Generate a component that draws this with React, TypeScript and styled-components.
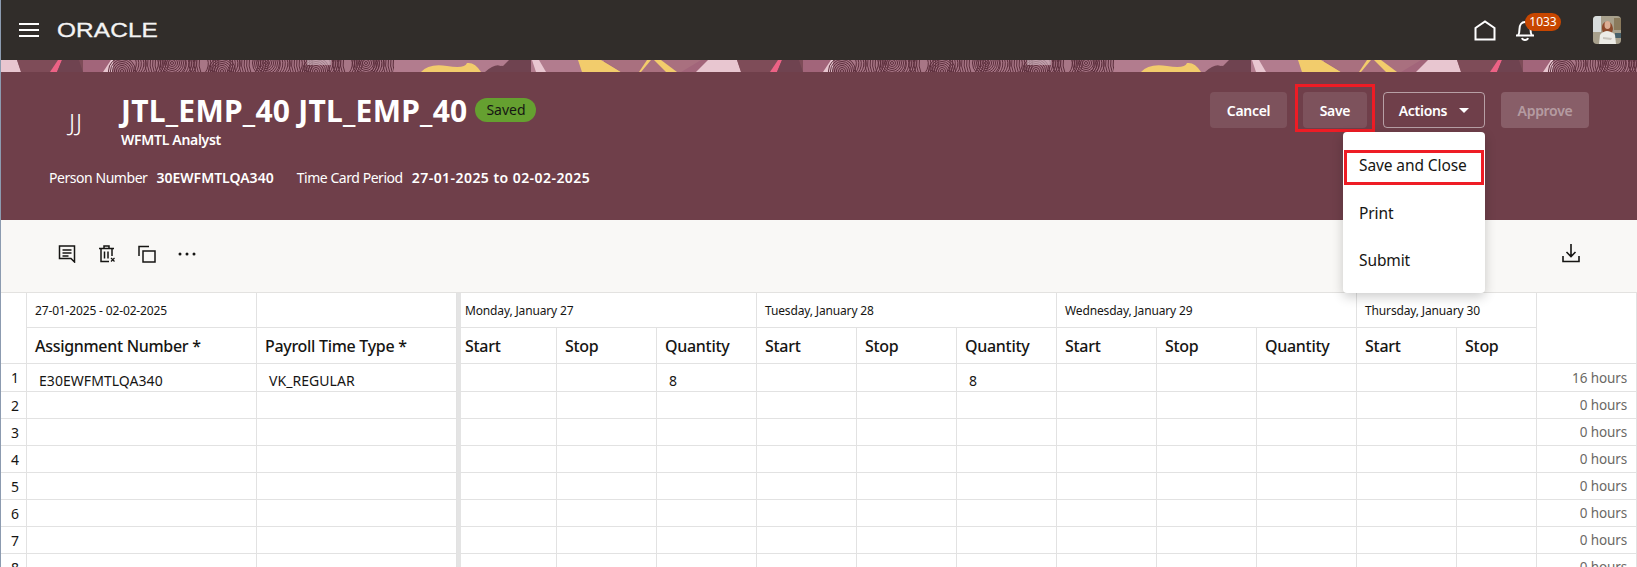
import React from "react";
import styled, { createGlobalStyle } from "styled-components";

const FONT = `"Noto Sans", "Open Sans", Arial, sans-serif`;

const GlobalStyle = createGlobalStyle`
  html, body {
    margin: 0;
    padding: 0;
    height: 567px;
    overflow: hidden;
    background: #fff;
    font-family: ${FONT};
  }
  * { box-sizing: border-box; }
`;

const Page = styled.div`
  width: 1637px;
  height: 567px;
  overflow: hidden;
  border-left: 1px solid #8c9bb0;
  display: flex;
  flex-direction: column;
  color: #161513;
`;

/* top nav */
const NavBar = styled.header`
  height: 60px;
  flex: none;
  background: #312d2a;
  display: flex;
  align-items: center;
  padding: 0 16px 0 18px;
`;
const Menu = styled.button`
  width: 20px;
  height: 14px;
  padding: 0;
  border: 0;
  background: none;
  display: flex;
  flex-direction: column;
  justify-content: space-between;
  margin-top: -1px;
  span { display: block; height: 2px; background: #fff; }
`;
const Logo = styled.div`
  margin-left: 18px;
  width: 100px;
  color: #f4f4f4;
  font-family: "Liberation Sans", Arial, sans-serif;
  font-size: 19.5px;
  line-height: 20px;
  letter-spacing: 0.1px;
  white-space: nowrap;
  transform: scaleX(1.25);
  transform-origin: left center;
  -webkit-text-stroke: 0.3px #f4f4f4;
`;
const NavRight = styled.div`
  margin-left: auto;
  display: flex;
  align-items: center;
`;
const NavIcon = styled.div`
  position: relative;
  display: flex;
  margin-right: ${(p: { $gap: number }) => p.$gap}px;
`;
const Badge = styled.span`
  position: absolute;
  left: 10px;
  top: -7px;
  width: 36px;
  height: 18px;
  border-radius: 9px;
  background: #c74600;
  color: #fff;
  font-size: 12px;
  line-height: 18px;
  text-align: center;
`;
const Avatar = styled.div`
  width: 28px;
  height: 28px;
  border-radius: 4px;
  overflow: hidden;
  display: flex;
`;

/* decorative strip */
const Strip = styled.div`
  height: 12px;
  flex: none;
  display: flex;
  background: #a2657a;
`;

/* banner */
const Banner = styled.section`
  height: 148px;
  flex: none;
  background: #6f3f4a;
  color: #fff;
  padding: 20px 48px 0 48px;
  display: flex;
  justify-content: space-between;
  align-items: flex-start;
`;
const Person = styled.div`
  display: flex;
  flex-direction: column;
`;
const PersonTop = styled.div`
  display: flex;
  align-items: flex-start;
`;
const Initials = styled.div`
  width: 72px;
  padding: 15px 0 0 20px;
  font-size: 24px;
  font-weight: 300;
  line-height: 30px;
  letter-spacing: 1px;
`;
const NameRow = styled.div`
  display: flex;
  align-items: center;
  gap: 8px;
`;
const Name = styled.h1`
  margin: 0;
  padding-top: 2px;
  font-size: 30px;
  line-height: 34px;
  font-weight: 700;
  letter-spacing: 0.25px;
  white-space: nowrap;
`;
const Status = styled.span`
  width: 61px;
  height: 24px;
  border-radius: 12px;
  background: #65a030;
  color: #161513;
  font-size: 14px;
  line-height: 23px;
  text-align: center;
`;
const Role = styled.div`
  font-size: 14px;
  font-weight: 600;
  line-height: 20px;
  letter-spacing: -0.3px;
  margin-top: 2px;
`;
const Facts = styled.div`
  display: flex;
  margin-top: 18px;
  font-size: 14px;
  line-height: 20px;
  white-space: nowrap;
`;
const FactLabel = styled.span`
  margin-right: 9px;
  letter-spacing: -0.45px;
`;
const FactValue = styled.span<{ $track?: number }>`
  font-weight: 600;
  margin-right: 23px;
  letter-spacing: ${(p) => p.$track ?? 0}px;
`;
const Actions = styled.div`
  display: flex;
  gap: 16px;
`;
const Button = styled.button<{ $w: number; $kind?: "outline" | "disabled" }>`
  position: relative;
  width: ${(p) => p.$w}px;
  height: 36px;
  margin: 0;
  padding: 0;
  border-radius: 4px;
  font-family: ${FONT};
  font-size: 14px;
  font-weight: 600;
  letter-spacing: -0.3px;
  color: ${(p) => (p.$kind === "disabled" ? "rgba(255,255,255,0.4)" : "#fff")};
  border: ${(p) => (p.$kind === "outline" ? "1px solid rgba(255,255,255,0.5)" : "0")};
  background: ${(p) =>
    p.$kind === "outline" ? "transparent" : p.$kind === "disabled" ? "#885e68" : "#7d525c"};
  display: flex;
  align-items: center;
  justify-content: center;
  gap: 12px;
`;
const Highlight = styled.span`
  position: absolute;
  left: -8px;
  right: -8px;
  top: -8px;
  bottom: -4px;
  border: 3px solid #ee1c25;
`;
const Caret = styled.i`
  width: 0;
  height: 0;
  border-left: 5px solid transparent;
  border-right: 5px solid transparent;
  border-top: 5px solid #fff;
`;
const ActionsMenu = styled.div`
  position: absolute;
  top: 39px;
  right: -1px;
  width: 142px;
  height: 161px;
  padding: 10px 0;
  background: #fff;
  border-radius: 4px;
  box-shadow: 0 4px 12px rgba(0, 0, 0, 0.2);
  z-index: 5;
`;
const MenuItem = styled.div`
  position: relative;
  height: 47.5px;
  line-height: 47px;
  padding-left: 16px;
  color: #161513;
  font-size: 15.5px;
  font-weight: 400;
  letter-spacing: -0.1px;
  text-align: left;
`;
const ItemHighlight = styled.span`
  position: absolute;
  left: 1px;
  right: 1px;
  top: 8px;
  bottom: 5px;
  border: 3px solid #ee1c25;
`;

/* toolbar */
const Toolbar = styled.div`
  height: 73px;
  flex: none;
  background: #f9f8f6;
  border-bottom: 1px solid #e3e2e0;
  display: flex;
  align-items: flex-start;
  justify-content: space-between;
  padding: 24px 57px 0 57px;
`;
const ToolGroup = styled.div<{ $drop?: number }>`
  display: flex;
  gap: 22px;
  margin-top: ${(p) => p.$drop ?? 0}px;
  svg { display: block; }
`;

/* grid */
const Sheet = styled.table`
  table-layout: fixed;
  width: 1636px;
  border-collapse: separate;
  border-spacing: 0;
  font-size: 13px;
`;
const Cell = styled.td<{ $split?: boolean }>`
  height: 27px;
  padding: 0 0 0 ${(p) => (p.$split ? 4 : 8)}px;
  border-right: 1px solid #e2e2e2;
  border-bottom: 1px solid #e2e2e2;
  border-left: ${(p) => (p.$split ? "4px solid #e4e4e4" : "0")};
  overflow: hidden;
  white-space: nowrap;
`;
const DateCell = styled(Cell).attrs({ as: "th" })`
  height: 35px;
  font-size: 12px;
  font-weight: 400;
  text-align: left;
  letter-spacing: -0.15px;
`;
const HeadCell = styled(Cell).attrs({ as: "th" })`
  height: 36px;
  font-size: 16px;
  font-weight: 500;
  text-align: left;
  letter-spacing: -0.3px;
`;
const BlankHead = styled(Cell).attrs({ as: "th" })`
  height: 71px;
`;
const RowNo = styled(Cell)`
  font-size: 14px;
  padding-left: 10px;
`;
const Value = styled.span`
  display: block;
  padding: 7px 0 0 4px;
  line-height: 20px;
  font-size: 14px;
  letter-spacing: 0.05px;
`;
const Total = styled(Cell)`
  text-align: right;
  padding: 0 9px 0 0;
  font-size: 13.5px;
  color: #6b6965;
  letter-spacing: -0.1px;
`;

const tile = 720;

// fingerprint lines for the banner artwork
const whorls: React.ReactElement[] = [];
for (let i = 0; i < 24; i++) {
  const cx = 118 + i * 12 + (i % 3) * 2;
  const tilt = i % 4 === 0;
  if (tilt) {
    for (let r = 1.5; r < 14; r += 2) {
      whorls.push(<circle key={`c${i}-${r}`} cx={cx + 3} cy={i % 8 === 0 ? 11 : 3} r={r} />);
    }
  } else {
    for (let k = 0; k < 5; k++) {
      const x = cx + k * 2.5;
      const s = i % 2 ? 5 : -3;
      whorls.push(<path key={`l${i}-${k}`} d={`M${x} 13Q${x + s} 6 ${x + s / 2} -1`} />);
    }
  }
}

const BannerArt = () => (
  <svg width="1636" height="12" aria-hidden="true">
    <defs>
      <pattern id="art" width={tile} height="12" patternUnits="userSpaceOnUse" x="0">
        <rect width={tile} height="12" fill="#a2657a" />
        <polygon points="0,0 16,0 20,12 0,12" fill="#e8c6d0" />
        <polygon points="16,0 82,0 82,12 20,12" fill="#7e4c58" />
        <polygon points="57,0 61,0 56,12 49,12" fill="#ec6285" />
        <polygon points="61,0 78,0 82,12 56,12" fill="#6f4350" />
        <rect x="110" width="283" height="12" fill="#a87686" />
        <polygon points="110,0 112,0 112,12 102,12" fill="#e8c6d0" />
        <g fill="none" stroke="#5a2c3a" strokeWidth="1">{whorls}</g>
        <rect x="306" width="24" height="5" fill="#d9c3cb" opacity="0.55" />
        <rect x="393" width="210" height="12" fill="#b27c8e" />
        <path d="M420 12Q428 3 446 6T466 3Q474 2 480 12Z" fill="#f2cc6c" />
        <path d="M484 12Q494 3 500 6L507 0H530V12Z" fill="#6f4350" />
        <path d="M487 3L497 0H508L502 6Z" fill="#b27c8e" />
        <polygon points="531,0 538,0 545,12 535,12" fill="#e8c6d0" />
        <polygon points="577,0 600,0 620,12 581,12" fill="#f2cc6c" />
        <polygon points="602,0 700,0 680,12 620,12" fill="#a9707f" />
        <polygon points="646,0 650,0 640,12 638,12" fill="#f2cc6c" />
        <polygon points="653,0 660,0 676,12 665,12" fill="#f2cc6c" />
        <polygon points="695,12 707,0 720,0 720,12" fill="#e8c6d0" />
      </pattern>
    </defs>
    <rect width="1636" height="12" fill="url(#art)" />
  </svg>
);

const HomeIcon = () => (
  <svg width="22" height="21" viewBox="0 0 22 21" fill="none" stroke="#fff" strokeWidth="2">
    <path d="M1.500 19.500V8L11 1.500 20.500 8v11.500z" />
  </svg>
);
const BellIcon = () => (
  <svg width="20" height="21" viewBox="0 0 20 21" fill="none" stroke="#fff" strokeWidth="2">
    <path d="M1 15.500h18M3 15.500c1.500-2 1.500-4 1.500-6.500C4.500 5 6.500 2 10 2s5.500 3 5.500 7c0 2.500 0 4.500 1.500 6.500" />
    <path d="M7 18c.5 1.500 1.500 2 3 2s2.500-.5 3-2" />
  </svg>
);
const PhotoIcon = () => (
  <svg width="28" height="28" viewBox="0 0 28 28">
    <rect width="28" height="28" fill="#a8a08c" />
    <rect width="8" height="16" fill="#d8dcdc" />
    <rect x="21" y="2" width="7" height="12" fill="#8a7a5c" />
    <rect x="22" y="17" width="6" height="5" fill="#46606a" />
    <path d="M9 13c-1-9 10-11 11 0l-1 4h-9z" fill="#8c4a2c" />
    <ellipse cx="14.500" cy="9" rx="3" ry="4" fill="#dcae94" />
    <path d="M6 28l1-9c2-3 5-4 7-4s6 1 8 4l1 9z" fill="#ecebe6" />
    <path d="M10 21l9 1-1 2-8-1z" fill="#c8c4bc" />
  </svg>
);
const CommentIcon = () => (
  <svg width="18" height="18" viewBox="0 0 18 18" fill="none" stroke="#161513" strokeWidth="1.500">
    <path d="M1.500 1h15v16l-3.500-3.500H1.500z" />
    <path d="M4.500 5h9M4.500 8h9M4.500 11h6" />
  </svg>
);
const DeleteIcon = () => (
  <svg width="18" height="18" viewBox="0 0 18 18" fill="none" stroke="#161513" strokeWidth="1.500">
    <path d="M1 3.500h15M6 3.500V1h5v2.500M3 3.500V16.500h8M14 3.500V11M6.500 6.500v7M10 6.500v7" />
    <path d="M13 13l3.500 3.500M16.500 13L13 16.500" strokeWidth="1.200" />
  </svg>
);
const CopyIcon = () => (
  <svg width="18" height="18" viewBox="0 0 18 18" fill="none" stroke="#161513" strokeWidth="1.500">
    <path d="M1 11V1.500h10" />
    <rect x="5" y="6" width="12" height="11" />
  </svg>
);
const MoreIcon = () => (
  <svg width="18" height="18" viewBox="0 0 18 18" fill="#161513">
    <circle cx="2" cy="9" r="1.500" />
    <circle cx="9" cy="9" r="1.500" />
    <circle cx="16" cy="9" r="1.500" />
  </svg>
);
const DownloadIcon = () => (
  <svg width="18" height="19" viewBox="0 0 18 19" fill="none" stroke="#161513" strokeWidth="1.600">
    <path d="M9 0v12M4.500 8L9 12.500 13.500 8M1 12v5.500h16V12" />
  </svg>
);

const days = [
  { label: "Monday, January 27", cols: ["Start", "Stop", "Quantity"] },
  { label: "Tuesday, January 28", cols: ["Start", "Stop", "Quantity"] },
  { label: "Wednesday, January 29", cols: ["Start", "Stop", "Quantity"] },
  { label: "Thursday, January 30", cols: ["Start", "Stop"] },
];
const timeCols = days.flatMap((d) => d.cols);

const rows = [
  { assignment: "E30EWFMTLQA340", type: "VK_REGULAR", qty: ["", "", "8", "", "", "8"], total: "16 hours" },
  ...[2, 3, 4, 5, 6, 7, 8].map(() => ({ assignment: "", type: "", qty: [] as string[], total: "0 hours" })),
];

export default function App() {
  return (
    <Page>
      <GlobalStyle />
      <NavBar>
        <Menu aria-label="Menu">
          <span />
          <span />
          <span />
        </Menu>
        <Logo>ORACLE</Logo>
        <NavRight>
          <NavIcon $gap={19}>
            <HomeIcon />
          </NavIcon>
          <NavIcon $gap={58}>
            <BellIcon />
            <Badge>1033</Badge>
          </NavIcon>
          <Avatar>
            <PhotoIcon />
          </Avatar>
        </NavRight>
      </NavBar>
      <Strip>
        <BannerArt />
      </Strip>
      <Banner>
        <Person>
          <PersonTop>
            <Initials>JJ</Initials>
            <div>
              <NameRow>
                <Name>JTL_EMP_40 JTL_EMP_40</Name>
                <Status>Saved</Status>
              </NameRow>
              <Role>WFMTL Analyst</Role>
            </div>
          </PersonTop>
          <Facts>
            <FactLabel>Person Number</FactLabel>
            <FactValue>30EWFMTLQA340</FactValue>
            <FactLabel>Time Card Period</FactLabel>
            <FactValue $track={0.45}>27-01-2025 to 02-02-2025</FactValue>
          </Facts>
        </Person>
        <Actions>
          <Button $w={77}>Cancel</Button>
          <Button $w={64}>
            Save
            <Highlight />
          </Button>
          <Button $w={102} $kind="outline">
            Actions
            <Caret />
            <ActionsMenu>
              <MenuItem>
                Save and Close
                <ItemHighlight />
              </MenuItem>
              <MenuItem>Print</MenuItem>
              <MenuItem>Submit</MenuItem>
            </ActionsMenu>
          </Button>
          <Button $w={88} $kind="disabled">
            Approve
          </Button>
        </Actions>
      </Banner>
      <Toolbar>
        <ToolGroup $drop={1}>
          <CommentIcon />
          <DeleteIcon />
          <CopyIcon />
          <MoreIcon />
        </ToolGroup>
        <ToolGroup>
          <DownloadIcon />
        </ToolGroup>
      </Toolbar>
      <Sheet>
        <colgroup>
          <col style={{ width: 26 }} />
          <col style={{ width: 230 }} />
          <col style={{ width: 200 }} />
          {timeCols.map((_, i) => (
            <col key={i} style={{ width: i === timeCols.length - 1 ? 80 : 100 }} />
          ))}
          <col style={{ width: 100 }} />
        </colgroup>
        <thead>
          <tr>
            <BlankHead rowSpan={2} />
            <DateCell>27-01-2025 - 02-02-2025</DateCell>
            <DateCell />
            {days.map((d, i) => (
              <DateCell key={d.label} colSpan={d.cols.length} $split={i === 0}>
                {d.label}
              </DateCell>
            ))}
            <BlankHead rowSpan={2} />
          </tr>
          <tr>
            <HeadCell>Assignment Number *</HeadCell>
            <HeadCell>Payroll Time Type *</HeadCell>
            {timeCols.map((c, i) => (
              <HeadCell key={i} $split={i === 0}>
                {c}
              </HeadCell>
            ))}
          </tr>
        </thead>
        <tbody>
          {rows.map((r, n) => (
            <tr key={n}>
              <RowNo>{n + 1}</RowNo>
              <Cell>
                <Value>{r.assignment}</Value>
              </Cell>
              <Cell>
                <Value>{r.type}</Value>
              </Cell>
              {timeCols.map((_, i) => (
                <Cell key={i} $split={i === 0}>
                  <Value>{r.qty[i]}</Value>
                </Cell>
              ))}
              <Total>{r.total}</Total>
            </tr>
          ))}
        </tbody>
      </Sheet>
    </Page>
  );
}
